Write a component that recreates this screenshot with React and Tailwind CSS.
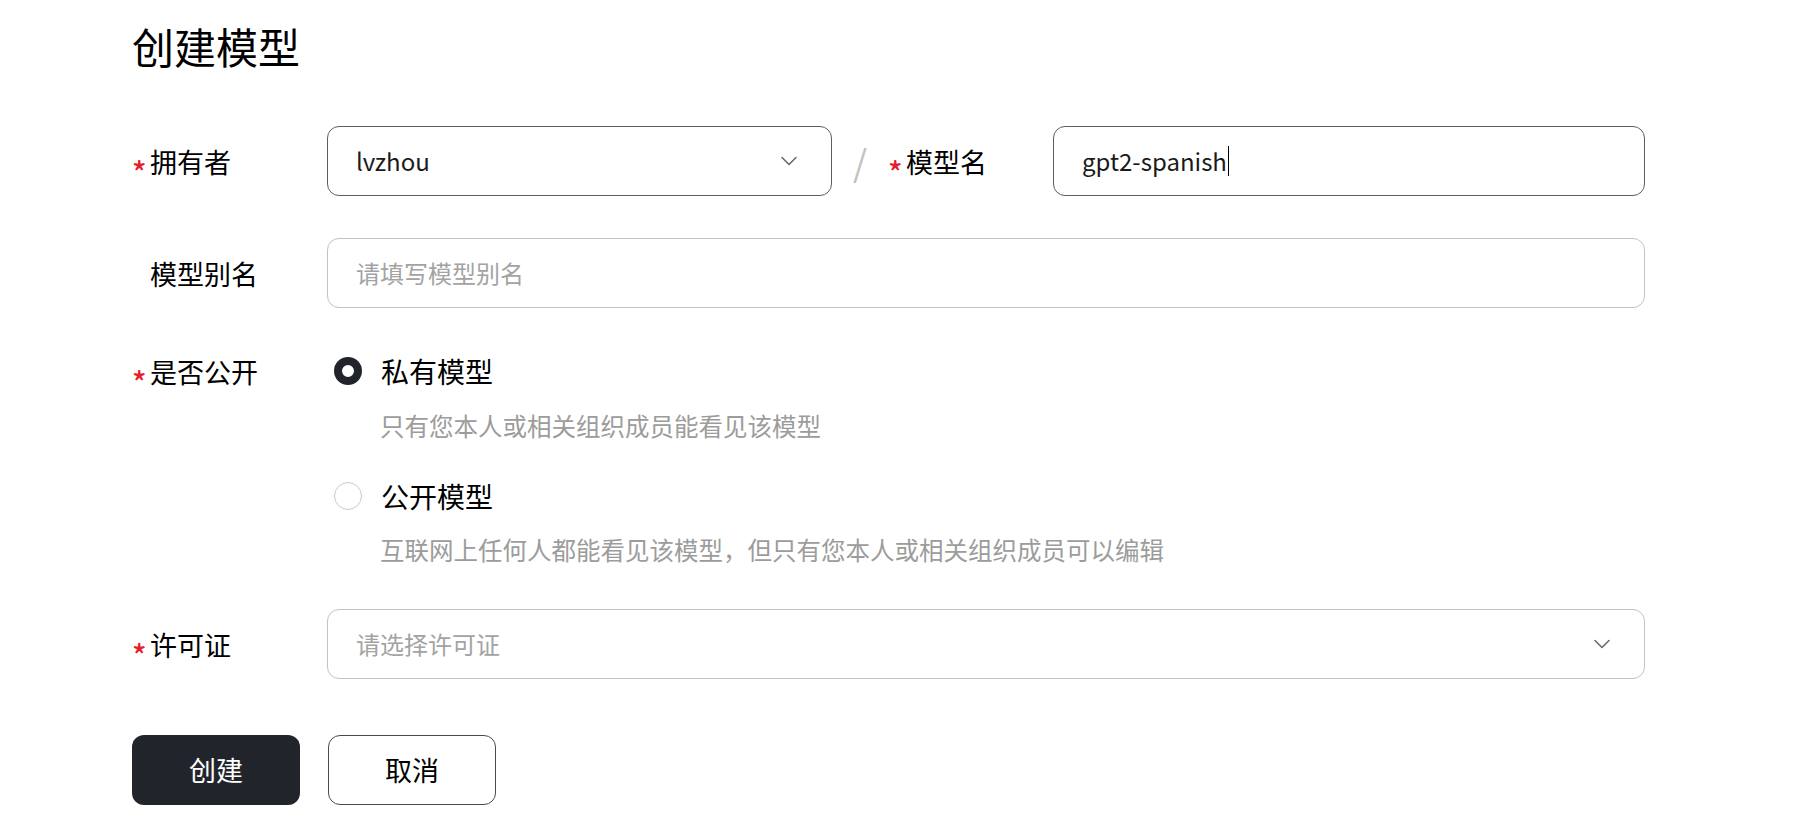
import React from "react";

const FONT = { fontFamily: '"Noto Sans CJK SC", "Noto Sans", sans-serif' };

function Chevron() {
  return (
    <svg width="28" height="28" viewBox="0 0 24 24" fill="none" stroke="#6b6b6b" strokeWidth="1.4" strokeLinecap="round" strokeLinejoin="round">
      <path d="m6 9 6 6 6-6" />
    </svg>
  );
}

function Label({ required, children, className = "" }) {
  return (
    <div className={"flex items-center text-[27px] text-black pt-[3px] " + className}>
      <span className="w-[18px] h-[40px] flex items-center">
        {required ? (
          <span className="text-[30px] font-medium text-[#e5202e] leading-none mt-[16px]">*</span>
        ) : null}
      </span>
      <span>{children}</span>
    </div>
  );
}

export default function App() {
  return (
    <div className="min-h-screen bg-white pl-[132px] pt-[18px]" style={FONT}>
      <h1 className="text-[42px] leading-[56px] text-black font-normal">创建模型</h1>

      <div className="w-[1513px] mt-[52px]">
        {/* Row 1 */}
        <div className="flex items-center h-[70px]">
          <Label required className="w-[195px]">拥有者</Label>
          <div className="w-[505px] h-[70px] rounded-[12px] border border-[#5e5e5e] flex items-center justify-between pl-[28px] pr-[28px]">
            <span className="text-[24px] text-[#1a1a1a]">lvzhou</span>
            <Chevron />
          </div>
          <div className="w-[56px] flex justify-center text-[36px] text-[#c2c2c2] leading-none">/</div>
          <Label required className="w-[165px]">模型名</Label>
          <div className="flex-1 h-[70px] rounded-[12px] border border-[#5e5e5e] flex items-center pl-[28px]">
            <span className="text-[24px] text-[#1a1a1a]">gpt2-spanish</span>
            <span className="w-[1.5px] h-[30px] bg-black ml-[1px]"></span>
          </div>
        </div>

        {/* Row 2 */}
        <div className="flex items-center h-[70px] mt-[42px]">
          <Label className="w-[195px]">模型别名</Label>
          <div className="flex-1 h-[70px] rounded-[12px] border border-[#c2c2c2] flex items-center pl-[28px]">
            <span className="text-[24px] text-[#a3a3a3]">请填写模型别名</span>
          </div>
        </div>

        {/* Row 3 */}
        <div className="flex mt-[41px]">
          <div className="w-[195px] h-[44px] flex items-center">
            <Label required>是否公开</Label>
          </div>
          <div className="flex flex-col">
            <div className="flex items-center h-[44px]">
              <div className="w-[54px] pl-[7px] flex items-center">
                <span className="w-[28px] h-[28px] rounded-full border-[8px] border-[#21242b] bg-white"></span>
              </div>
              <span className="text-[28px] text-black">私有模型</span>
            </div>
            <div className="pl-[53px] mt-[15px] text-[24.5px] leading-[36px] text-[#9c9c9c]">只有您本人或相关组织成员能看见该模型</div>
            <div className="flex items-center h-[44px] mt-[30px]">
              <div className="w-[54px] pl-[7px] flex items-center">
                <span className="w-[28px] h-[28px] rounded-full border-[1.5px] border-[#c9c9c9] bg-white"></span>
              </div>
              <span className="text-[28px] text-black">公开模型</span>
            </div>
            <div className="pl-[53px] mt-[14px] text-[24.5px] leading-[36px] text-[#9c9c9c]">互联网上任何人都能看见该模型，但只有您本人或相关组织成员可以编辑</div>
          </div>
        </div>

        {/* Row 4 */}
        <div className="flex items-center h-[70px] mt-[41px]">
          <Label required className="w-[195px]">许可证</Label>
          <div className="flex-1 h-[70px] rounded-[12px] border border-[#c2c2c2] flex items-center justify-between pl-[28px] pr-[28px]">
            <span className="text-[24px] text-[#a3a3a3]">请选择许可证</span>
            <Chevron />
          </div>
        </div>

        {/* Buttons */}
        <div className="flex gap-[28px] mt-[56px]">
          <button className="w-[168px] h-[70px] rounded-[12px] bg-[#21242b] text-white text-[27px]">创建</button>
          <button className="w-[168px] h-[70px] rounded-[12px] border border-[#4a4a4a] bg-white text-black text-[27px]">取消</button>
        </div>
      </div>
    </div>
  );
}
